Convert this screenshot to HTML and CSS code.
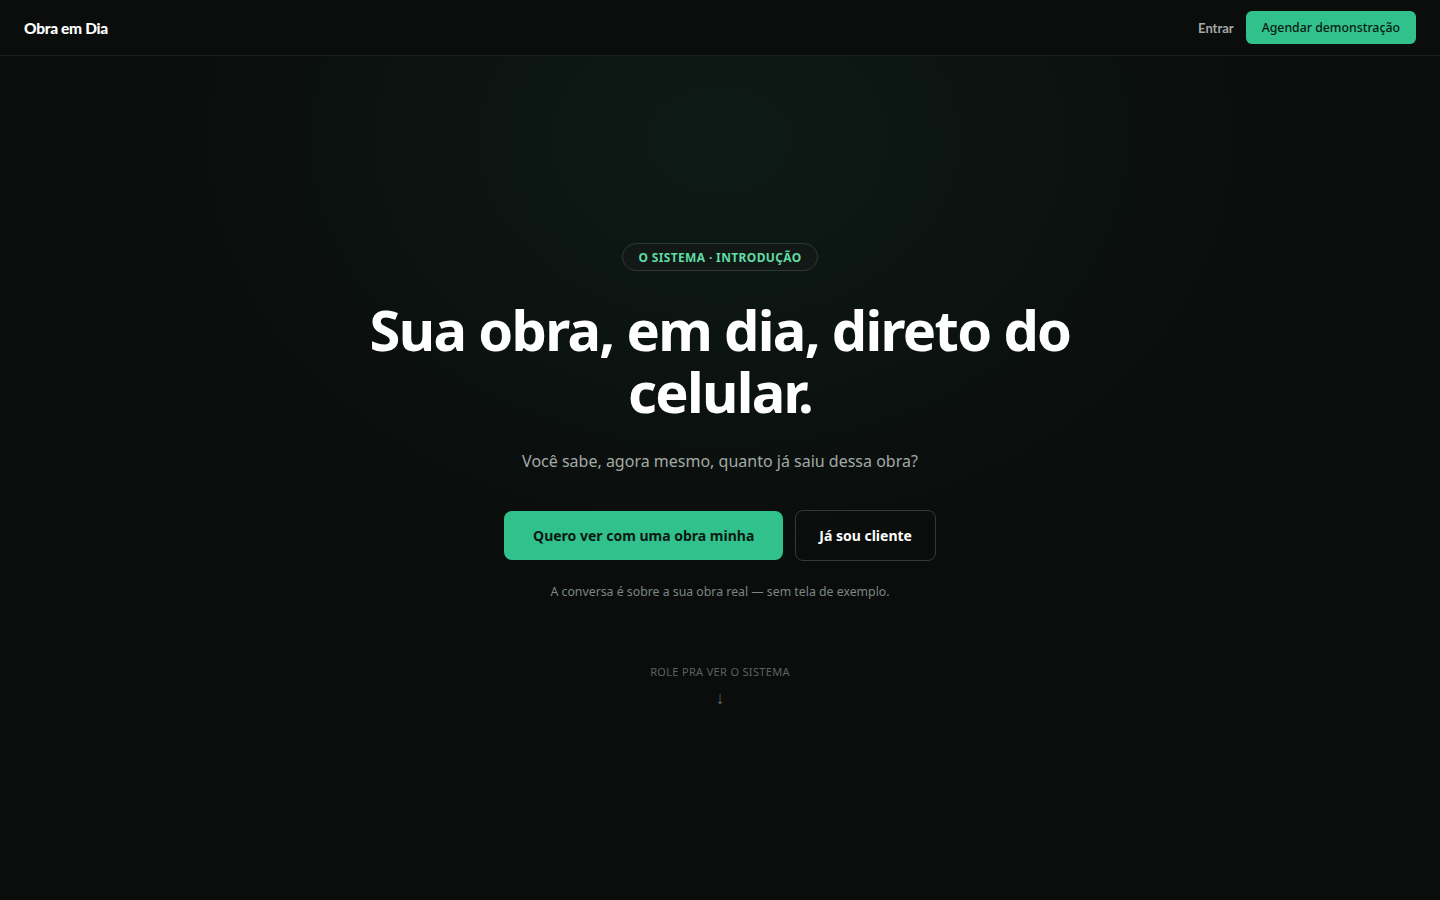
FILE: index.html
```html
<!DOCTYPE html>
<html lang="pt-BR">
<head>
<meta charset="utf-8">
<title>Obra em Dia</title>
<link rel="stylesheet" href="styles.css">
</head>
<body>
<header class="nav">
  <a class="logo" href="#">Obra em Dia</a>
  <div class="nav-actions">
    <a class="nav-link" href="#">Entrar</a>
    <a class="nav-cta" href="#">Agendar demonstração</a>
  </div>
</header>
<main class="hero">
  <div class="hero-inner">
    <span class="badge">O sistema · Introdução</span>
    <h1 class="title">Sua obra, em dia, direto do celular.</h1>
    <p class="subtitle">Você sabe, agora mesmo, quanto já saiu dessa obra?</p>
    <div class="actions">
      <a class="btn btn-primary" href="#">Quero ver com uma obra minha</a>
      <a class="btn btn-outline" href="#">Já sou cliente</a>
    </div>
    <p class="note">A conversa é sobre a sua obra real — sem tela de exemplo.</p>
    <div class="scroll">
      <span class="scroll-label">Role pra ver o sistema</span>
      <span class="scroll-arrow">↓</span>
    </div>
  </div>
</main>
</body>
</html>
```
FILE: styles.css
```css
* { box-sizing: border-box; }
html, body { margin: 0; padding: 0; }
body {
  background: #0a0d0c;
  color: #fff;
  font-family: "Noto Sans", "Open Sans", sans-serif;
  min-height: 100vh;
}
a { text-decoration: none; color: inherit; }

.nav {
  height: 56px;
  display: flex;
  align-items: center;
  justify-content: space-between;
  padding: 0 24px;
  border-bottom: 1px solid #1c2220;
  background: #0a0d0c;
}
.logo {
  font-family: Lato, sans-serif;
  font-weight: 900;
  font-size: 15.5px;
  letter-spacing: -0.02em;
  color: #fff;
}
.nav-actions { display: flex; align-items: center; gap: 12px; }
.nav-link {
  font-family: Lato, sans-serif;
  font-weight: 700;
  font-size: 13px;
  color: #a3a8a6;
}
.nav-cta {
  background: #31c18d;
  color: #0a1a13;
  font-size: 12.3px;
  font-weight: 500;
  height: 33px;
  padding: 0 16px;
  border-radius: 6px;
  display: flex;
  align-items: center;
}

.hero {
  min-height: calc(100vh - 56px);
  display: flex;
  align-items: center;
  justify-content: center;
  background: radial-gradient(ellipse 560px 420px at 50% 10%, rgba(28, 80, 56, 0.2), rgba(10, 13, 12, 0) 100%);
}
.hero-inner {
  display: flex;
  flex-direction: column;
  align-items: center;
  text-align: center;
  padding-bottom: 4px;
}
.badge {
  display: inline-flex;
  align-items: center;
  height: 28px;
  padding: 0 15px;
  border: 1px solid #2d3a34;
  border-radius: 999px;
  background: #111815;
  color: #5fdca6;
  font-size: 12px;
  font-weight: 700;
  letter-spacing: 0.03em;
  text-transform: uppercase;
}
.title {
  margin: 28px 0 0;
  max-width: 760px;
  font-size: 56px;
  line-height: 1.1;
  font-weight: 700;
  letter-spacing: -0.03em;
  color: #fff;
}
.subtitle {
  margin: 28px 0 0;
  font-size: 16px;
  color: #a2aaa6;
  line-height: 1.45;
}
.actions {
  margin-top: 37px;
  display: flex;
  gap: 12px;
  align-items: center;
}
.btn {
  display: inline-flex;
  align-items: center;
  justify-content: center;
  font-size: 14px;
  font-weight: 700;
  border-radius: 8px;
}
.btn-primary {
  height: 49px;
  padding: 0 29px;
  background: #31c18d;
  color: #0a1a13;
}
.btn-outline {
  height: 51px;
  padding: 0 23px;
  border: 1px solid #343a38;
  color: #fff;
  background: transparent;
}
.note {
  margin: 22px 0 0;
  font-size: 12.3px;
  color: #7d8682;
}
.scroll {
  margin-top: 64px;
  display: flex;
  flex-direction: column;
  align-items: center;
  gap: 8px;
}
.scroll-label {
  font-size: 11px;
  text-transform: uppercase;
  letter-spacing: 0.03em;
  color: #5b6360;
}
.scroll-arrow {
  font-size: 18px;
  color: #5b6360;
  line-height: 1.2;
}
```
